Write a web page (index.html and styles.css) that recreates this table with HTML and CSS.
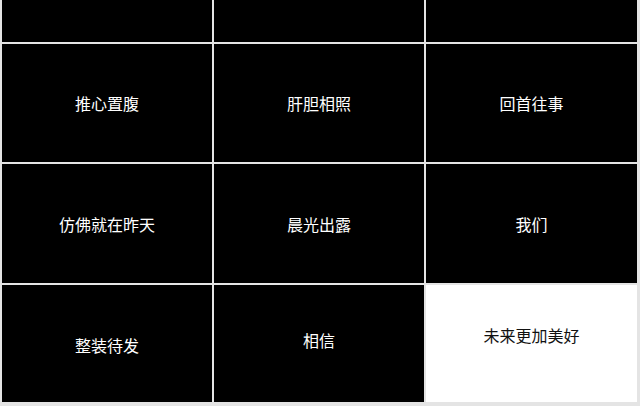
FILE: index.html
```html
<!DOCTYPE html>
<html lang="zh-CN">
<head>
<meta charset="utf-8">
<title>Grid</title>
<link rel="stylesheet" href="styles.css">
</head>
<body>
<div class="grid">
  <div class="cell"></div>
  <div class="cell"></div>
  <div class="cell"></div>
  <div class="cell">推心置腹</div>
  <div class="cell">肝胆相照</div>
  <div class="cell">回首往事</div>
  <div class="cell">仿佛就在昨天</div>
  <div class="cell">晨光出露</div>
  <div class="cell">我们</div>
  <div class="cell shift-down">整装待发</div>
  <div class="cell shift-up">相信</div>
  <div class="cell light shift-up-more">未来更加美好</div>
</div>
</body>
</html>
```
FILE: styles.css
```css
html, body {
  margin: 0;
  padding: 0;
  background: #e4e4e4;
}
.grid {
  width: 640px;
  height: 406px;
  box-sizing: border-box;
  padding: 0 3px 4px 2px;
  display: grid;
  grid-template-columns: 210px 210px 211px;
  grid-template-rows: 42px 118px 119px 117px;
  gap: 2px;
  font-family: "Noto Sans CJK SC", "Microsoft YaHei", sans-serif;
  font-size: 16px;
}
.cell {
  background: #000;
  color: #fff;
  display: flex;
  align-items: center;
  justify-content: center;
  box-sizing: border-box;
}
.light {
  background: #fff;
  color: #111;
}
.shift-down {
  padding-top: 3px;
}
.shift-up {
  padding-bottom: 7px;
}
.shift-up-more {
  padding-bottom: 17px;
}
```
